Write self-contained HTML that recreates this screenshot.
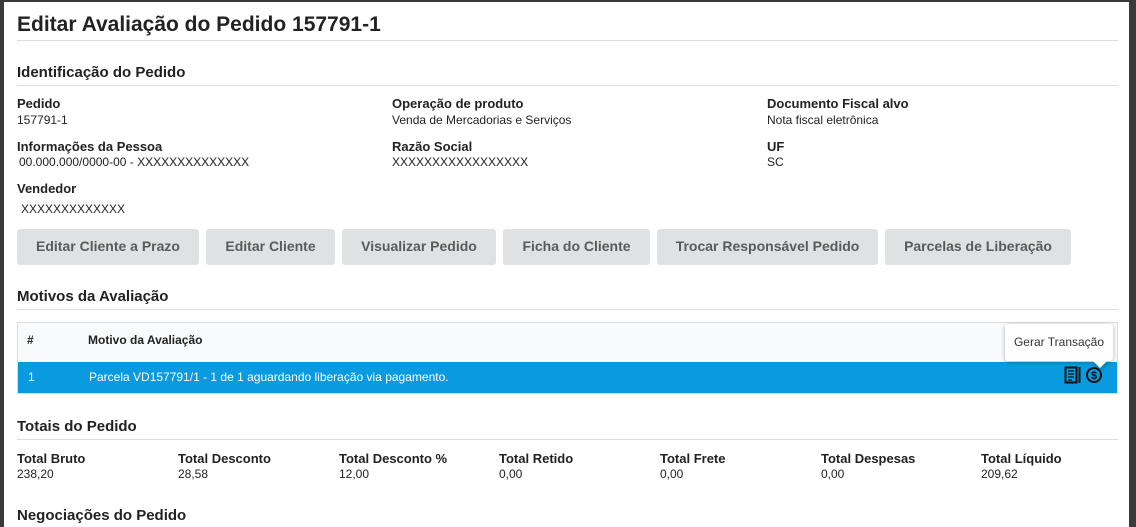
<!DOCTYPE html>
<html style="width:1136px;height:527px;overflow:hidden"><head><meta charset="utf-8"><style>
*{margin:0;padding:0;box-sizing:border-box}
body{width:1136px;height:527px;background:#3a3a3a;font-family:"Liberation Sans",Arial,sans-serif;color:#222;overflow:hidden;position:relative}
.m{position:absolute;left:4px;top:2px;width:1125px;height:525px;background:#fff}
.a{position:absolute;white-space:nowrap}
.h1{font-size:21px;font-weight:bold}
.h2{font-size:15px;font-weight:bold}
.hr{position:absolute;left:17px;width:1101px;height:1px;background:#ddd}
.l{font-size:13px;font-weight:bold}
.v{font-size:12px}
.b{position:absolute;top:229px;height:36px;background:#e0e1e2;border-radius:3px;color:#5a5a5a;font-size:14px;font-weight:bold;text-align:center;line-height:35px}
</style></head><body>
<div class="m"></div>
<div class="a h1" style="left:17px;top:13px">Editar Avaliação do Pedido 157791-1</div>
<div class="hr" style="top:40px"></div>
<div class="a h2" style="left:17px;top:64px">Identificação do Pedido</div>
<div class="hr" style="top:85px"></div>
<div class="a l" style="left:17px;top:96px">Pedido</div>
<div class="a v" style="left:17px;top:113px">157791-1</div>
<div class="a l" style="left:392px;top:96px">Operação de produto</div>
<div class="a v" style="left:392px;top:113px">Venda de Mercadorias e Serviços</div>
<div class="a l" style="left:767px;top:96px">Documento Fiscal alvo</div>
<div class="a v" style="left:767px;top:113px">Nota fiscal eletrônica</div>
<div class="a l" style="left:17px;top:139px">Informações da Pessoa</div>
<div class="a v" style="left:19px;top:155px">00.000.000/0000-00 - XXXXXXXXXXXXXX</div>
<div class="a l" style="left:392px;top:139px">Razão Social</div>
<div class="a v" style="left:392px;top:155px">XXXXXXXXXXXXXXXXX</div>
<div class="a l" style="left:767px;top:139px">UF</div>
<div class="a v" style="left:767px;top:155px">SC</div>
<div class="a l" style="left:17px;top:181px">Vendedor</div>
<div class="a v" style="left:21px;top:202px">XXXXXXXXXXXXX</div>
<div class="b" style="left:17px;width:182px">Editar Cliente a Prazo</div>
<div class="b" style="left:206px;width:129px">Editar Cliente</div>
<div class="b" style="left:342px;width:154px">Visualizar Pedido</div>
<div class="b" style="left:503px;width:147px">Ficha do Cliente</div>
<div class="b" style="left:657px;width:221px">Trocar Responsável Pedido</div>
<div class="b" style="left:885px;width:186px">Parcelas de Liberação</div>
<div class="a h2" style="left:17px;top:288px">Motivos da Avaliação</div>
<div class="hr" style="top:309px"></div>
<div class="a" style="left:17px;top:322px;width:1101px;height:72px;border:1px solid #ddd;background:#f9fafb"></div>
<div class="a" style="left:18px;top:362px;width:1099px;height:31px;background:#0a9ae0"></div>
<div class="a" style="left:27px;top:333px;font-size:12px;font-weight:bold">#</div>
<div class="a" style="left:88px;top:333px;font-size:12px;font-weight:bold">Motivo da Avaliação</div>
<div class="a" style="left:28px;top:370px;font-size:12px;color:#fff">1</div>
<div class="a" style="left:89px;top:370px;font-size:12px;color:#fff">Parcela VD157791/1 - 1 de 1 aguardando liberação via pagamento.</div>
<svg class="a" style="left:1064px;top:366px" width="40" height="20" viewBox="0 0 40 20">
<rect x="1.5" y="1.5" width="11" height="15" fill="none" stroke="#111" stroke-width="2"/>
<path d="M4 5h6M4 8h6M4 11h6M4 14h4" stroke="#111" stroke-width="1.3"/>
<rect x="14.5" y="1" width="2" height="16" fill="#111"/>
<circle cx="30" cy="9" r="7" fill="none" stroke="#111" stroke-width="2"/>
<text x="30" y="13" font-size="11" font-weight="bold" text-anchor="middle" fill="#111" font-family="Liberation Sans">$</text>
</svg>
<div class="a" style="left:1005px;top:324px;width:108px;height:37px;background:#fff;border-radius:3px;box-shadow:0 1px 4px rgba(0,0,0,.3);color:#333;line-height:37px;text-align:center;font-size:12px">Gerar Transação</div>
<div class="a" style="left:1095px;top:356px;width:10px;height:10px;background:#fff;transform:rotate(45deg);box-shadow:2px 2px 3px rgba(0,0,0,.2)"></div>
<div class="a h2" style="left:17px;top:418px">Totais do Pedido</div>
<div class="hr" style="top:439px"></div>
<div class="a l" style="left:17px;top:451px">Total Bruto</div><div class="a v" style="left:17px;top:467px">238,20</div>
<div class="a l" style="left:178px;top:451px">Total Desconto</div><div class="a v" style="left:178px;top:467px">28,58</div>
<div class="a l" style="left:339px;top:451px">Total Desconto %</div><div class="a v" style="left:339px;top:467px">12,00</div>
<div class="a l" style="left:499px;top:451px">Total Retido</div><div class="a v" style="left:499px;top:467px">0,00</div>
<div class="a l" style="left:660px;top:451px">Total Frete</div><div class="a v" style="left:660px;top:467px">0,00</div>
<div class="a l" style="left:821px;top:451px">Total Despesas</div><div class="a v" style="left:821px;top:467px">0,00</div>
<div class="a l" style="left:981px;top:451px">Total Líquido</div><div class="a v" style="left:981px;top:467px">209,62</div>
<div class="a h2" style="left:17px;top:507px">Negociações do Pedido</div>
</body></html>
